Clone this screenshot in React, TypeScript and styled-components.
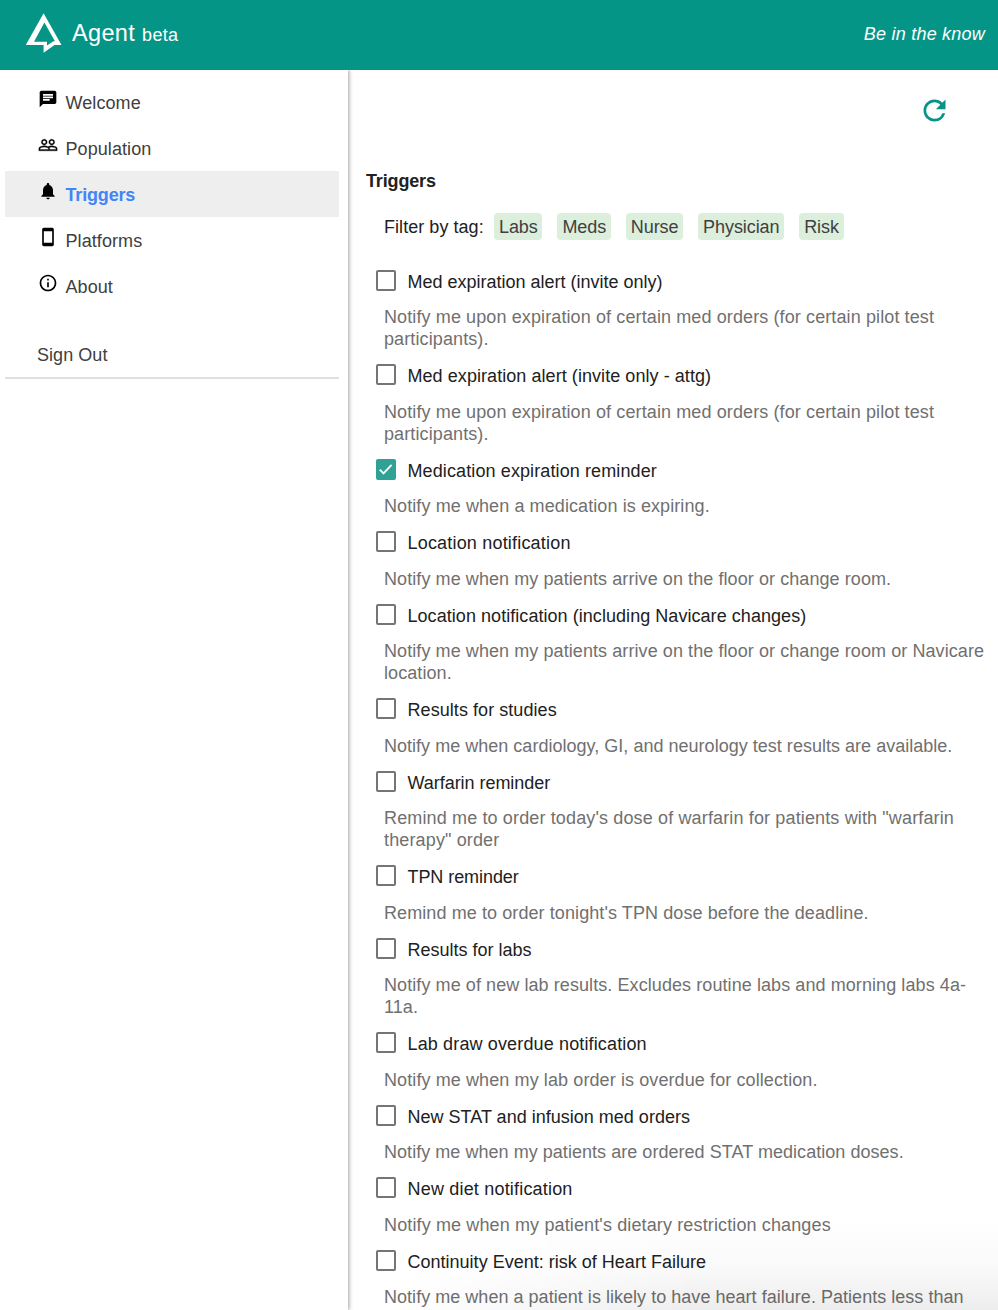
import React from "react";
import styled, { createGlobalStyle } from "styled-components";
import { MdChat, MdNotifications, MdStayCurrentPortrait, MdInfoOutline, MdRefresh } from "react-icons/md";

const GlobalStyle = createGlobalStyle`
  * { box-sizing: border-box; }
  body {
    margin: 0;
    background: #fff;
    font-family: "Liberation Sans", Arial, sans-serif;
    font-size: 18px;
    letter-spacing: 0.05px;
    color: #212121;
    overflow: hidden;
  }
`;

const Page = styled.div`
  position: relative;
  display: flex;
  flex-direction: column;
  height: 1310px;
  overflow: hidden;
`;

const Header = styled.header`
  display: flex;
  align-items: center;
  flex: none;
  height: 70px;
  padding: 0 13px 3px 25px;
  background: #049587;
  color: #fff;
`;

const Brand = styled.div`
  flex: 1;
  padding-left: 10px;
  font-size: 23.5px;
  letter-spacing: 0.35px;
  white-space: nowrap;
`;

const Beta = styled.span`
  font-size: 18px;
`;

const Tagline = styled.em`
  padding-top: 2px;
  letter-spacing: 0.22px;
`;

const Body = styled.div`
  display: flex;
  flex: 1;
  min-height: 0;
`;

const Sidebar = styled.aside`
  flex: none;
  width: 348px;
  padding: 9px 9px 0 5px;
  box-shadow: 1px 0 4px rgba(0, 0, 0, 0.38);
  clip-path: inset(0 -8px 0 0);
`;

const NavItem = styled.a<{ $active?: boolean }>`
  display: flex;
  height: 46px;
  padding: 10px 0 0 33px;
  gap: 7.5px;
  line-height: 28px;
  letter-spacing: ${(p) => (p.$active ? "-0.17px" : "0.08px")};
  color: ${(p) => (p.$active ? "#4285f4" : "#404040")};
  font-weight: ${(p) => (p.$active ? 700 : 400)};
  background: ${(p) => (p.$active ? "#eeeeee" : "transparent")};

  svg { flex: none; width: 20px; height: 20px; color: #000; }
`;

const SignOut = styled.div`
  height: 70px;
  padding: 32px 0 0 32px;
  line-height: 28px;
  color: #404040;
  border-bottom: 2px solid #e0e0e0;
`;

const Main = styled.main`
  flex: 1;
  min-width: 0;
  padding: 0 0 0 18px;
`;

const Toolbar = styled.div`
  display: flex;
  justify-content: flex-end;
  height: 99px;
  padding: 23.5px 47.5px 0 0;
  color: #049587;
`;

const Title = styled.h1`
  margin: 0;
  font-size: 18px;
  line-height: 24px;
  letter-spacing: -0.15px;
`;

const Filters = styled.div`
  display: flex;
  align-items: center;
  margin-top: 20px;
  padding-left: 18px;
  height: 27px;
  gap: 15px;
`;

const FilterLabel = styled.span`
  width: 95px;
  padding-top: 1px;
  white-space: nowrap;
`;

const Tag = styled.span`
  height: 27px;
  padding: 1px 4.7px 0 5px;
  line-height: 27px;
  letter-spacing: -0.08px;
  border-radius: 4px;
  background: #dceedc;
  color: #404040;
`;

const List = styled.ul`
  margin: 28.5px 0 0;
  padding: 0;
  list-style: none;
`;

const Row = styled.li`
  padding-bottom: 13px;
`;

const Label = styled.div<{ $tracking: number }>`
  display: flex;
  height: 37.5px;
  padding-left: 10px;
  gap: 11.5px;
  line-height: 27px;
  letter-spacing: ${(p) => p.$tracking}px;
  white-space: nowrap;
`;

const Box = styled.span<{ $checked?: boolean }>`
  flex: none;
  display: flex;
  width: 20px;
  height: 21px;
  margin-top: 1px;
  border: 2px solid ${(p) => (p.$checked ? "#2fa195" : "#757575")};
  border-radius: 2px;
  background: ${(p) => (p.$checked ? "#2fa195" : "#fff")};
`;

const Description = styled.p<{ $tracking: number }>`
  margin: 0;
  padding-left: 18px;
  line-height: 22px;
  letter-spacing: ${(p) => p.$tracking}px;
  color: #707070;
  white-space: pre;
`;

const BottomShade = styled.div`
  position: absolute;
  right: 0;
  bottom: 0;
  width: 600px;
  height: 90px;
  pointer-events: none;
  background: linear-gradient(to top, rgba(0, 0, 0, 0.07), rgba(0, 0, 0, 0.025) 45%, transparent);
  mask-image: linear-gradient(to right, transparent, #000 50%);
`;

const Logo = () => (
  <svg width="37" height="41" viewBox="0 0 37 41">
    <path
      fillRule="evenodd"
      fill="#fff"
      d="M18.6 .2L36.5 32H29.5L18.6 39.8V32H.8ZM19.4 9.5L9 28.7H22V32.6L28 28.4L29.8 28Z"
    />
  </svg>
);

const PeopleIcon = () => (
  <svg viewBox="0 0 24 24" fill="currentColor" stroke="currentColor" strokeWidth="0.4">
    <path d="M16.5 13c-1.2 0-3.07.34-4.5 1-1.43-.67-3.3-1-4.5-1C5.33 13 1 14.08 1 16.25V19h22v-2.75c0-2.17-4.33-3.25-6.5-3.25zm-4 4.5h-10v-1.25c0-.54 2.56-1.75 5-1.75s5 1.21 5 1.75v1.25zm9 0H14v-1.25c0-.46-.2-.86-.52-1.22.88-.3 1.96-.53 3.02-.53 2.44 0 5 1.21 5 1.75v1.25zM7.5 12c1.93 0 3.5-1.57 3.5-3.5S9.43 5 7.5 5 4 6.57 4 8.5 5.57 12 7.5 12zm0-5.5c1.1 0 2 .9 2 2s-.9 2-2 2-2-.9-2-2 .9-2 2-2zm9 5.5c1.93 0 3.5-1.57 3.5-3.5S18.43 5 16.5 5 13 6.57 13 8.5s1.57 3.5 3.5 3.5zm0-5.5c1.1 0 2 .9 2 2s-.9 2-2 2-2-.9-2-2 .9-2 2-2z" />
  </svg>
);

const CheckMark = () => (
  <svg width="16" height="17" viewBox="0 0 16 17">
    <path d="M1.8 8.6L5.5 12.3L13.6 3.8" fill="none" stroke="#fff" strokeWidth="1.9" />
  </svg>
);

const tags = ["Labs", "Meds", "Nurse", "Physician", "Risk"];

interface Trigger {
  name: string;
  text: string;
  checked?: boolean;
  /* letter spacing of the name and of the text, px */
  tracking: [number, number];
}

const triggers: Trigger[] = [
  { name: "Med expiration alert (invite only)", text: "Notify me upon expiration of certain med orders (for certain pilot test\nparticipants).", tracking: [0, 0.11] },
  { name: "Med expiration alert (invite only - attg)", text: "Notify me upon expiration of certain med orders (for certain pilot test\nparticipants).", tracking: [0.06, 0.11] },
  { name: "Medication expiration reminder", text: "Notify me when a medication is expiring.", checked: true, tracking: [0.11, 0.09] },
  { name: "Location notification", text: "Notify me when my patients arrive on the floor or change room.", tracking: [0.19, 0.08] },
  { name: "Location notification (including Navicare changes)", text: "Notify me when my patients arrive on the floor or change room or Navicare\nlocation.", tracking: [0.05, 0.08] },
  { name: "Results for studies", text: "Notify me when cardiology, GI, and neurology test results are available.", tracking: [0.06, 0.02] },
  { name: "Warfarin reminder", text: "Remind me to order today's dose of warfarin for patients with \"warfarin\ntherapy\" order", tracking: [-0.04, 0.14] },
  { name: "TPN reminder", text: "Remind me to order tonight's TPN dose before the deadline.", tracking: [-0.07, 0.09] },
  { name: "Results for labs", text: "Notify me of new lab results. Excludes routine labs and morning labs 4a-\n11a.", tracking: [0, 0.08] },
  { name: "Lab draw overdue notification", text: "Notify me when my lab order is overdue for collection.", tracking: [0.14, 0.1] },
  { name: "New STAT and infusion med orders", text: "Notify me when my patients are ordered STAT medication doses.", tracking: [0.01, 0.04] },
  { name: "New diet notification", text: "Notify me when my patient's dietary restriction changes", tracking: [0.19, 0.13] },
  { name: "Continuity Event: risk of Heart Failure", text: "Notify me when a patient is likely to have heart failure. Patients less than", tracking: [0.01, 0.03] },
];

export default function App() {
  return (
    <Page>
      <GlobalStyle />
      <Header>
        <Logo />
        <Brand>Agent <Beta>beta</Beta></Brand>
        <Tagline>Be in the know</Tagline>
      </Header>
      <Body>
        <Sidebar>
          <NavItem><MdChat />Welcome</NavItem>
          <NavItem><PeopleIcon />Population</NavItem>
          <NavItem $active><MdNotifications />Triggers</NavItem>
          <NavItem><MdStayCurrentPortrait />Platforms</NavItem>
          <NavItem><MdInfoOutline />About</NavItem>
          <SignOut>Sign Out</SignOut>
        </Sidebar>
        <Main>
          <Toolbar><MdRefresh size={33} /></Toolbar>
          <Title>Triggers</Title>
          <Filters>
            <FilterLabel>Filter by tag:</FilterLabel>
            {tags.map((t) => <Tag key={t}>{t}</Tag>)}
          </Filters>
          <List>
            {triggers.map((t) => (
              <Row key={t.name}>
                <Label $tracking={t.tracking[0]}>
                  <Box $checked={t.checked}>{t.checked && <CheckMark />}</Box>
                  {t.name}
                </Label>
                <Description $tracking={t.tracking[1]}>{t.text}</Description>
              </Row>
            ))}
          </List>
        </Main>
      </Body>
      <BottomShade />
    </Page>
  );
}
